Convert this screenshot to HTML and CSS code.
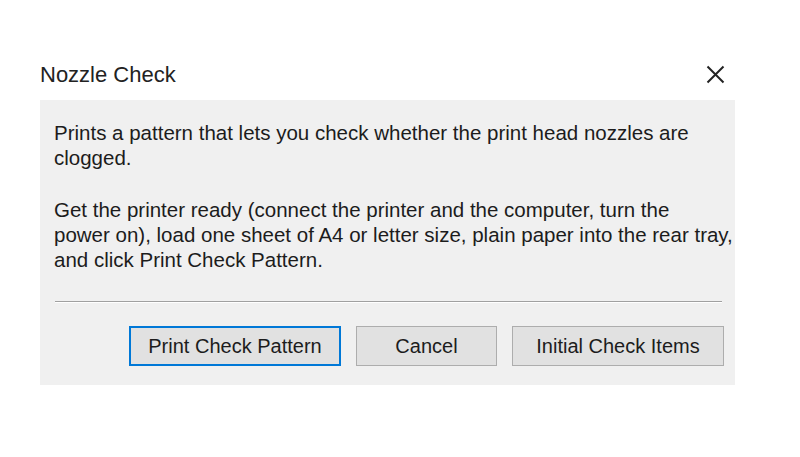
FILE: index.html
```html
<!DOCTYPE html>
<html>
<head>
<meta charset="utf-8">
<link rel="stylesheet" href="styles.css">
</head>
<body>
<div class="dialog">
  <div class="titlebar">
    <span class="title">Nozzle Check</span>
    <svg class="close" width="19" height="19" viewBox="0 0 19 19"><path d="M1.5 1.5 L17.5 17.5 M17.5 1.5 L1.5 17.5" stroke="#222" stroke-width="2" fill="none"/></svg>
  </div>
  <div class="panel">
    <p class="msg">Prints a pattern that lets you check whether the print head nozzles are<br>clogged.</p>
    <p class="msg second">Get the printer ready (connect the printer and the computer, turn the<br>power on), load one sheet of A4 or letter size, plain paper into the rear tray,<br>and click Print Check Pattern.</p>
    <div class="sep"></div>
    <div class="buttons">
      <button class="btn wide default">Print Check Pattern</button>
      <button class="btn narrow">Cancel</button>
      <button class="btn wide">Initial Check Items</button>
    </div>
  </div>
</div>
</body>
</html>
```
FILE: styles.css
```css
html, body {
  margin: 0;
  padding: 0;
  background: #ffffff;
}
body {
  font-family: "Liberation Sans", Arial, sans-serif;
  color: #1c1c1c;
}
.dialog {
  width: 695px;
  margin-left: 40px;
  padding-top: 55px;
}
.titlebar {
  height: 45px;
  display: flex;
  align-items: flex-start;
  justify-content: space-between;
}
.title {
  font-size: 22px;
  line-height: 24px;
  margin-top: 8px;
  color: #222;
}
.close {
  margin-top: 10px;
  margin-right: 10px;
}
.panel {
  background: #f0f0f0;
  height: 285px;
  box-sizing: border-box;
  padding: 20px 11px 0 14px;
}
.msg {
  margin: 0;
  font-size: 20.5px;
  line-height: 25px;
  white-space: nowrap;
}
.msg.second {
  margin-top: 27px;
}
.sep {
  margin-top: 29px;
  margin-left: 1px;
  margin-right: 2px;
  height: 1px;
  background: #a0a0a0;
  border-bottom: 1px solid #ffffff;
}
.buttons {
  margin-top: 23px;
  display: flex;
  justify-content: flex-end;
  gap: 15px;
}
.btn {
  height: 40px;
  box-sizing: border-box;
  background: #e1e1e1;
  border: 1px solid #adadad;
  font-family: "Liberation Sans", Arial, sans-serif;
  font-size: 20px;
  color: #1c1c1c;
  padding: 0;
}
.btn.wide { width: 212px; }
.btn.narrow { width: 141px; }
.btn.default {
  border: 2px solid #0078d7;
}
```
